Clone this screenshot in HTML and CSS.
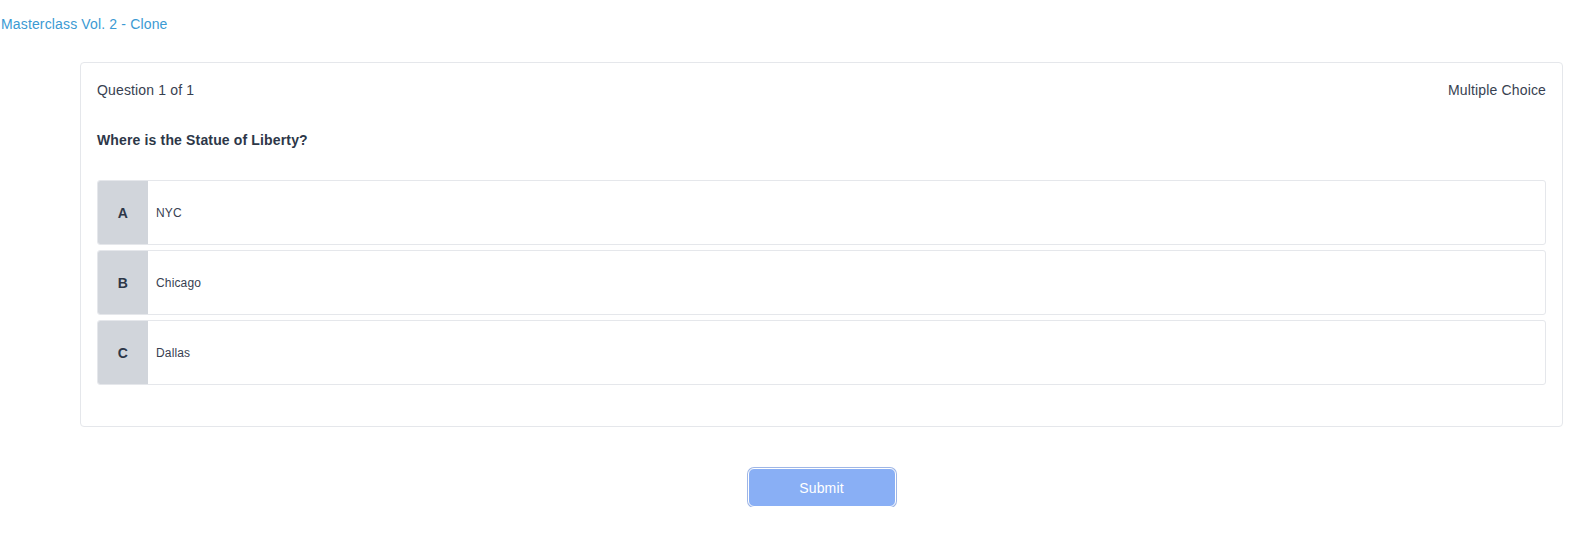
FILE: index.html
```html
<!DOCTYPE html>
<html>
<head>
<meta charset="utf-8">
<link rel="stylesheet" href="styles.css">
</head>
<body>
<header class="top"><a class="brand" href="#">Masterclass Vol. 2 - Clone</a></header>
<main class="wrap">
  <section class="card">
    <div class="card-head">
      <span>Question 1 of 1</span>
      <span>Multiple Choice</span>
    </div>
    <h2 class="question">Where is the Statue of Liberty?</h2>
    <div class="options">
      <div class="option"><div class="letter">A</div><div class="answer">NYC</div></div>
      <div class="option"><div class="letter">B</div><div class="answer">Chicago</div></div>
      <div class="option"><div class="letter">C</div><div class="answer">Dallas</div></div>
    </div>
  </section>
  <div class="actions"><button class="submit" type="button">Submit</button></div>
</main>
</body>
</html>
```
FILE: styles.css
```css
html, body {
  margin: 0;
  padding: 0;
  background: #fff;
  font-family: "Liberation Sans", Arial, sans-serif;
  font-size: 14px;
  letter-spacing: 0.15px;
  color: #374151;
}
.top {
  padding: 14px 1px 0;
  height: 20px;
  line-height: 20px;
}
.brand {
  color: #3b9ad3;
  text-decoration: none;
  font-size: 14px;
}
.wrap {
  margin: 28px 29px 0 80px;
}
.card {
  border: 1px solid #e5e7eb;
  border-radius: 4px;
  padding: 17px 16px 41px;
}
.card-head {
  display: flex;
  justify-content: space-between;
  line-height: 20px;
  color: #374151;
}
.question {
  margin: 30px 0 30px;
  font-size: 14px;
  line-height: 20px;
  font-weight: bold;
  color: #2d3748;
}
.options {
  display: flex;
  flex-direction: column;
  gap: 5px;
}
.option {
  display: flex;
  height: 63px;
  border: 1px solid #e5e7eb;
  border-radius: 3px;
  overflow: hidden;
}
.letter {
  width: 50px;
  flex: none;
  background: #d1d5db;
  display: flex;
  align-items: center;
  justify-content: center;
  font-weight: bold;
  font-size: 14px;
  color: #2d3748;
}
.answer {
  display: flex;
  align-items: center;
  padding-left: 8px;
  font-size: 12px;
  color: #374151;
}
.actions {
  display: flex;
  justify-content: center;
  padding-top: 41px;
}
.submit {
  width: 148px;
  height: 39px;
  border-radius: 6px;
  background: #89aff5;
  border: 1px solid #fff;
  box-shadow: 0 0 0 1px #9fb6e6;
  color: #fff;
  font-family: "Liberation Sans", Arial, sans-serif;
  font-size: 14px;
  letter-spacing: 0.15px;
}
```
